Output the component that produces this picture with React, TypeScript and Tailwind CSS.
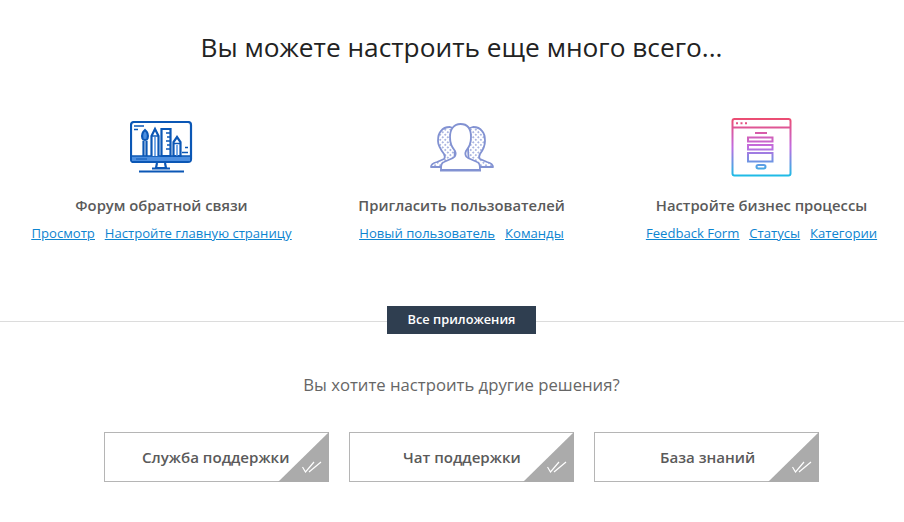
const font = { fontFamily: '"Open Sans", "Noto Sans", sans-serif' };

function Monitor() {
  const c = "#0b57b5";
  return (
    <svg width="64" height="52" viewBox="0 0 64 52" fill="none" stroke={c} strokeWidth="2.200">
      <rect x="1" y="1" width="60" height="40" rx="3" />
      <rect x="2" y="35" width="58" height="5" fill="#4d8fe0" stroke="none" />
      <path d="M1 35h60" strokeWidth="1.500" />
      <path d="M6 38h11" strokeWidth="1" />
      <path d="M27 42l-1 5h10l-1-5" />
      <path d="M22 47.500h18M9 50.500h45" />
      <path d="M4 5h10M4 8.500h4" strokeWidth="1.700" />
      <path d="M15 9c2.500 2 3.500 5 2.500 8.500-.4 1.200-1 1.500-2.500 1.500s-2.100-.3-2.500-1.500C11.500 14 12.500 11 15 9z" fill="#4d8fe0" />
      <path d="M13.500 20v15M16.500 20v15" />
      <path d="M21.500 35V15l3.500-7 3.500 7v20" fill="#fff" />
      <path d="M21.500 15h7" strokeWidth="1.500" />
      <path d="M25 16v19" strokeWidth="1.500" stroke="#4d8fe0" />
      <path d="M31.500 35V8h9v27z" />
      <path d="M36 12h4M37 16h3M36 20h4M37 24h3M36 28h4" strokeWidth="1.400" />
      <path d="M43.500 35V21l3.500-5 3.500 5v14z" />
      <path d="M43.500 22.500h7" strokeWidth="1.500" />
      <path d="M47 24v11" strokeWidth="1.500" stroke="#4d8fe0" />
      <path d="M52 31.500h6M55 26.500h3" strokeWidth="1.500" />
    </svg>
  );
}

function Users() {
  return (
    <svg width="64" height="50" viewBox="0 0 64 50" fill="none" stroke="#8292d2" strokeWidth="1.800" strokeLinejoin="round">
      <defs>
        <pattern id="dots" width="3.600" height="3.600" patternUnits="userSpaceOnUse" patternTransform="rotate(45)">
          <circle cx="1.800" cy="1.800" r="0.800" fill="#8292d2" stroke="none" />
        </pattern>
      </defs>
      <path d="M1 45c0-3 2-4 6-5l7-3c1-1 1-3 0-5-3-4-6-8-6-13 0-3 1-8 3-10 2-3 6-4 9-4l6 2-2 38H1z" fill="url(#dots)" />
      <path d="M63 45c0-3-2-4-6-5l-7-3c-1-1-1-3 0-5 3-4 5-8 5-13 0-3-1-8-3-10-2-3-6-4-9-4l-6 2 2 38h24z" fill="url(#dots)" />
      <path d="M11 48c0-5 0-7 4-8.500l8-3.500c3-1 3-5 2-7-3-4-5-7-5-14 0-8 4-13 10.500-13S41 6 41 15c0 7-2 10-5 14-1 2-1 6 2 7l8 3.500c4 1.500 4 3.500 4 8.500z" fill="#fff" />
      <path d="M10 48.500h41" strokeWidth="2" />
    </svg>
  );
}

function Form() {
  return (
    <svg width="62" height="60" viewBox="0 0 62 60" fill="none" strokeWidth="2" stroke="url(#grad)">
      <defs>
        <linearGradient id="grad" gradientUnits="userSpaceOnUse" x1="0" y1="0" x2="0" y2="60">
          <stop offset="0" stopColor="#ee4b6c" />
          <stop offset="0.5" stopColor="#c26be0" />
          <stop offset="1" stopColor="#17bfe6" />
        </linearGradient>
      </defs>
      <rect x="1.500" y="2" width="58" height="56.500" rx="2" />
      <path d="M1.500 10.500h58" />
      <path d="M5 6.300h2M9.500 6.300h2M14 6.300h2" />
      <path d="M24 16h12" />
      <rect x="17" y="20.500" width="24.500" height="4" />
      <rect x="17" y="28" width="24.500" height="4.500" />
      <rect x="17" y="36" width="24.500" height="8.500" />
      <rect x="25.500" y="48" width="9" height="3.500" rx="1.700" />
    </svg>
  );
}

function Checks() {
  return (
    <svg width="20" height="12" viewBox="0 0 20 12" fill="none" stroke="#fff" strokeWidth="1.200" className="absolute right-[6px] bottom-[8px]">
      <path d="M0.500 6l3 5L12 1" />
      <path d="M7 11L19 1" />
    </svg>
  );
}

function Feature({ icon, title, links }: { icon: React.ReactNode; title: string; links: string[] }) {
  return (
    <div className="flex flex-col items-center">
      <div className="flex h-[60px] items-center justify-center">{icon}</div>
      <div className="mt-[18px] text-[14.8px] font-semibold leading-[20px] text-[#5a5a5a]">{title}</div>
      <div className="mt-[9px] flex gap-[10px] text-[13.1px] leading-[18px] text-[#0d84d0] underline">
        {links.map((l) => (
          <a key={l}>{l}</a>
        ))}
      </div>
    </div>
  );
}

function Tile({ label, pad }: { label: string; pad: string }) {
  return (
    <div className={`relative flex h-[50px] w-[225px] items-center border border-[#b5b5b5] bg-white text-[15.1px] font-semibold text-[#5a5a5a] ${pad}`}>
      <span>{label}</span>
      <div className="absolute -right-px -top-px h-[50px] w-[51px] bg-[#ababab] [clip-path:polygon(100%_0,100%_100%,0_100%)]" />
      <Checks />
    </div>
  );
}

export default function App() {
  return (
    <div className="h-[522px] w-[904px] overflow-hidden bg-white" style={font}>
      <div className="w-[923px]">
        <h1 className="pt-[27px] text-center text-[26.25px] font-normal leading-[40px] text-[#222]">
          Вы можете настроить еще много всего...
        </h1>
        <div className="mx-auto mt-[50px] grid w-[900px] grid-cols-3">
          <Feature icon={<Monitor />} title="Форум обратной связи" links={["Просмотр", "Настройте главную страницу"]} />
          <Feature icon={<Users />} title="Пригласить пользователей" links={["Новый пользователь", "Команды"]} />
          <Feature icon={<Form />} title="Настройте бизнес процессы" links={["Feedback Form", "Статусы", "Категории"]} />
        </div>
        <div className="relative mt-[64px] flex h-[28px] items-center justify-center">
          <div className="absolute inset-x-0 top-[15px] h-px bg-[#dcdcdc]" />
          <div className="relative flex h-[28px] w-[149px] items-center justify-center bg-[#2f3e50] text-[12.8px] font-semibold text-white">
            Все приложения
          </div>
        </div>
        <p className="mt-[39px] text-center text-[16.7px] leading-[24px] text-[#666]">Вы хотите настроить другие решения?</p>
        <div className="mt-[35px] flex justify-center gap-[20px]">
          <Tile label="Служба поддержки" pad="pl-[37px]" />
          <Tile label="Чат поддержки" pad="pl-[53px]" />
          <Tile label="База знаний" pad="pl-[65px]" />
        </div>
      </div>
    </div>
  );
}
